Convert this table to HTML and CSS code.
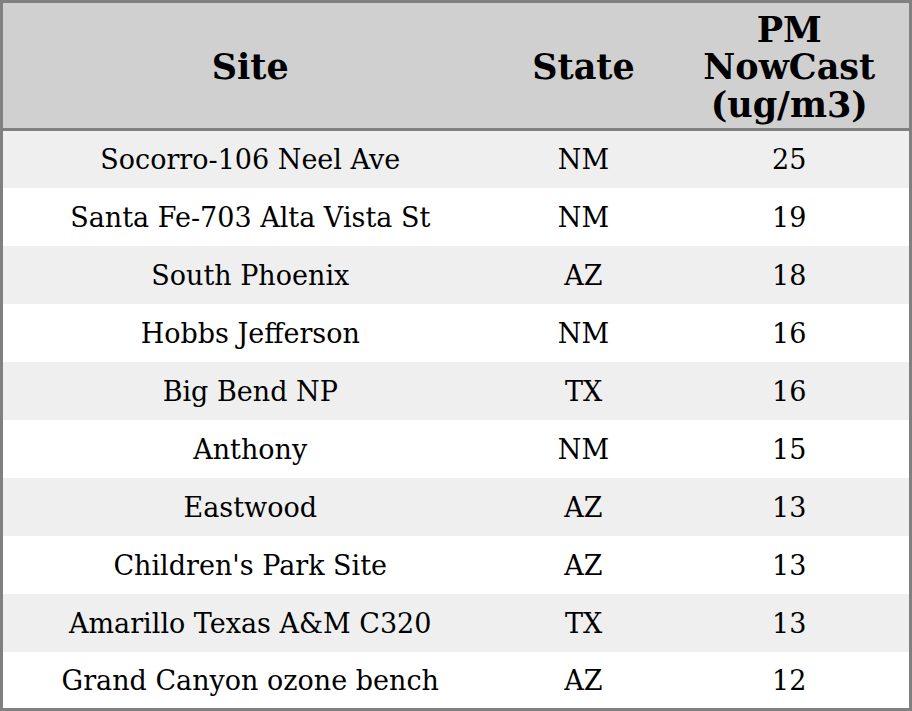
FILE: index.html
```html
<!DOCTYPE html>
<html>
<head>
<meta charset="utf-8">
<link rel="stylesheet" href="styles.css">
</head>
<body>
<table class="data">
  <colgroup>
    <col class="c-site">
    <col class="c-state">
    <col class="c-pm">
  </colgroup>
  <thead>
    <tr class="head-row">
      <th>Site</th>
      <th>State</th>
      <th>PM<br>NowCast<br>(ug/m3)</th>
    </tr>
  </thead>
  <tbody>
    <tr><td>Socorro-106 Neel Ave</td><td>NM</td><td>25</td></tr>
    <tr><td>Santa Fe-703 Alta Vista St</td><td>NM</td><td>19</td></tr>
    <tr><td>South Phoenix</td><td>AZ</td><td>18</td></tr>
    <tr><td>Hobbs Jefferson</td><td>NM</td><td>16</td></tr>
    <tr><td>Big Bend NP</td><td>TX</td><td>16</td></tr>
    <tr><td>Anthony</td><td>NM</td><td>15</td></tr>
    <tr><td>Eastwood</td><td>AZ</td><td>13</td></tr>
    <tr><td>Children's Park Site</td><td>AZ</td><td>13</td></tr>
    <tr><td>Amarillo Texas A&amp;M C320</td><td>TX</td><td>13</td></tr>
    <tr><td>Grand Canyon ozone bench</td><td>AZ</td><td>12</td></tr>
  </tbody>
</table>
</body>
</html>
```
FILE: styles.css
```css
html, body {
  margin: 0;
  padding: 0;
  background: #ffffff;
}
.data {
  width: 912px;
  height: 711px;
  border-collapse: collapse;
  border: 3px solid #808080;
  font-family: "DejaVu Serif", serif;
  color: #000000;
  table-layout: fixed;
}
.c-site { width: 496px; }
.c-state { width: 172px; }
.c-pm { width: 241px; }
.head-row {
  height: 128px;
  background: #d0d0d0;
}
.head-row th {
  font-size: 35px;
  font-weight: bold;
  line-height: 37.5px;
  text-align: center;
  vertical-align: middle;
  padding: 3px 0 0 0;
  border-bottom: 3px solid #808080;
}
.data tbody tr {
  height: 57.7px;
}
.data td {
  font-size: 27px;
  line-height: 30px;
  text-align: center;
  vertical-align: middle;
  padding: 2px 0 0 0;
}
.data tbody tr:nth-child(odd) {
  background: #efefef;
}
.data tbody tr:nth-child(even) {
  background: #ffffff;
}
```
